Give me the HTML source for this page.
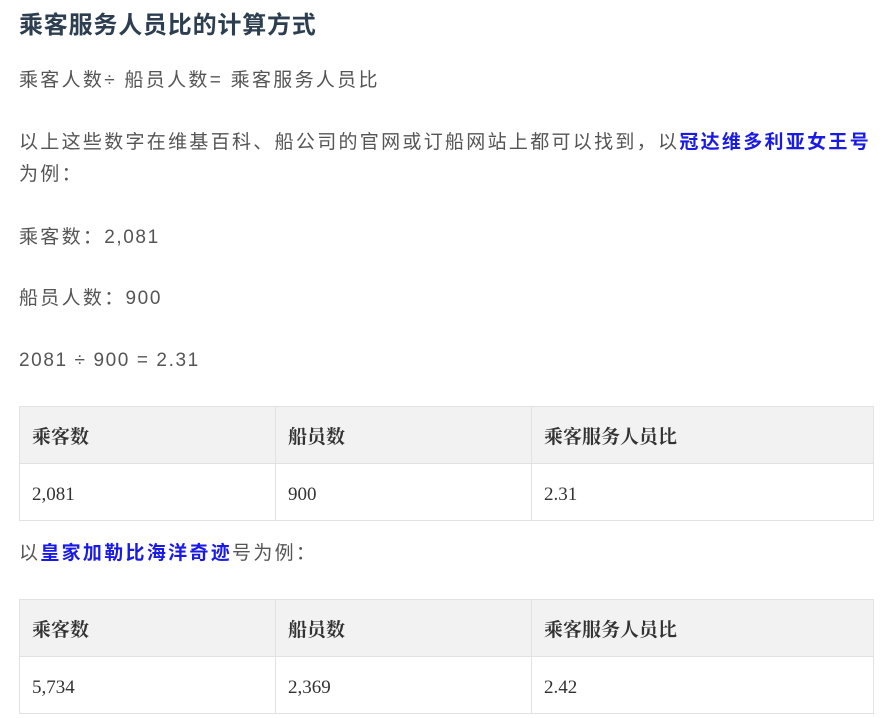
<!DOCTYPE html>
<html><head><meta charset="utf-8"><style>
body{margin:0;background:#fff;width:890px;height:718px;overflow:hidden;position:relative;font-family:"Liberation Sans","Noto Sans CJK SC",sans-serif;}
.a{position:absolute;left:19px;white-space:nowrap;}
h1{position:absolute;left:19px;top:5px;margin:0;font-size:24px;font-weight:bold;color:#2c3e50;letter-spacing:0.8px;}
.p{font-size:19px;color:#555;letter-spacing:2.3px;line-height:32px;}
.n{letter-spacing:1.6px;}
.b{color:#1a1ae6;font-weight:bold;}
table{position:absolute;left:19px;width:855px;border-collapse:collapse;font-family:"Liberation Serif","Noto Serif CJK SC",serif;font-size:19px;color:#333;}
td,th{border:1px solid #e2e2e2;text-align:left;padding:5px 12px 0 12px;height:51px;line-height:20px;}
th{background:#f2f2f2;font-weight:bold;}
</style></head><body>
<h1>乘客服务人员比的计算方式</h1>
<div class="a p" style="top:65px">乘客人数÷ 船员人数= 乘客服务人员比</div>
<div class="a p" style="top:127px">以上这些数字在维基百科、船公司的官网或订船网站上都可以找到，以<span class="b">冠达维多利亚女王号</span><br>为例：</div>
<div class="a p" style="top:222px">乘客数：<span class="n">2,081</span></div>
<div class="a p" style="top:283px">船员人数：<span class="n">900</span></div>
<div class="a p" style="top:345px"><span class="n">2081 ÷ 900 = 2.31</span></div>
<table style="top:406px"><tr><th style="width:231px">乘客数</th><th style="width:231px">船员数</th><th>乘客服务人员比</th></tr><tr><td>2,081</td><td>900</td><td>2.31</td></tr></table>
<div class="a p" style="top:538px">以<span class="b">皇家加勒比海洋奇迹</span>号为例：</div>
<table style="top:599px"><tr><th style="width:231px">乘客数</th><th style="width:231px">船员数</th><th>乘客服务人员比</th></tr><tr><td>5,734</td><td>2,369</td><td>2.42</td></tr></table>
</body></html>
